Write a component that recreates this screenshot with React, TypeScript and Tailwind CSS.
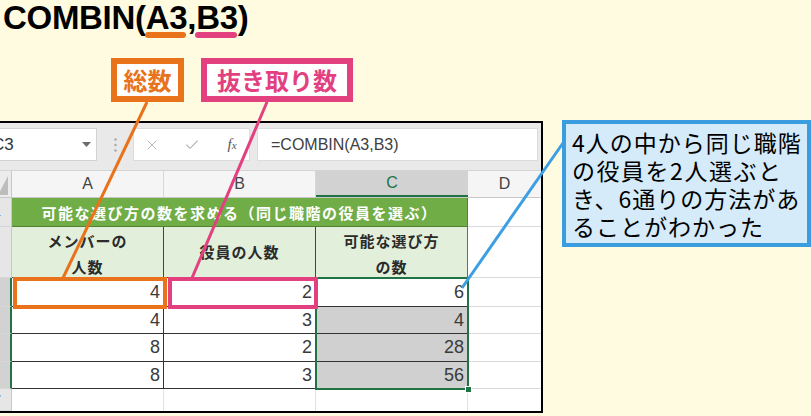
import { X, Check } from "lucide-react";

const JP = "font-['Noto_Sans_CJK_JP','Noto_Sans',sans-serif]";

const rows = [
  { n: 3, a: "4", b: "2", c: "6", h: "h-[29px]", sel: false },
  { n: 4, a: "4", b: "3", c: "4", h: "h-[27px]", sel: true },
  { n: 5, a: "8", b: "2", c: "28", h: "h-[28px]", sel: true },
  { n: 6, a: "8", b: "3", c: "56", h: "h-[27px]", sel: true },
];

function RowHead({ n, active }: { n: number; active?: boolean }) {
  return (
    <div
      className={`w-[30px] shrink-0 flex items-center justify-end pr-[10px] text-[13px] text-[#4d6584] border-b border-b-[#d6d6d6] ${
        active ? "bg-[#d2d2d2] border-r-2 border-r-[#217346]" : "bg-[#e6e6e6] border-r border-r-[#c8c8c8]"
      }`}
    >
      {n}
    </div>
  );
}

function FormulaBar() {
  return (
    <div className="flex items-start h-[48px] pt-[5px] bg-[#e9e9e9] border-b border-[#d4d4d4]">
      <div className="ml-[4px] w-[111px] h-[33px] shrink-0 bg-white border border-[#d2d2d2] flex items-center justify-between pl-[5px] pr-[5px]">
        <span className="text-[17px] text-[#333]">C3</span>
        <svg width="9" height="5" viewBox="0 0 9 5">
          <polygon points="0,0 9,0 4.5,5" fill="#6b6b6b" />
        </svg>
      </div>
      <div className="w-[36px] h-[33px] shrink-0 flex items-center justify-center">
        <svg width="3" height="14" viewBox="0 0 3 14">
          <circle cx="1.5" cy="1.5" r="1.2" fill="#a8a8a8" />
          <circle cx="1.5" cy="7" r="1.2" fill="#a8a8a8" />
          <circle cx="1.5" cy="12.5" r="1.2" fill="#a8a8a8" />
        </svg>
      </div>
      <div className="w-[117px] h-[33px] shrink-0 bg-white border border-[#dcdcdc] flex items-center pl-[10px] gap-[24px]">
        <X size={16} strokeWidth={1.4} color="#b4b4b4" />
        <Check size={16} strokeWidth={1.6} color="#b4b4b4" />
        <span className="w-[16px] text-center font-['Liberation_Serif',serif] italic text-[15px] text-[#555]">
          f<span className="text-[11px]">x</span>
        </span>
      </div>
      <div className="ml-[7px] w-[281px] h-[33px] shrink-0 bg-white border border-[#dcdcdc] flex items-center pl-[13px] text-[16px] text-[#404040]">
        =COMBIN(A3,B3)
      </div>
    </div>
  );
}

function Sheet() {
  return (
    <div className="-ml-[20px] mt-[19px] w-[563px] h-[292px] shrink-0 border-2 border-black bg-white flex flex-col font-['Liberation_Sans',sans-serif]">
      <FormulaBar />
      {/* column headers */}
      <div className="flex h-[27px] bg-[#f5f5f5] text-[16px] text-[#444] border-b border-[#c8c8c8]">
        <div className="w-[30px] shrink-0 bg-[#ececec] border-r border-[#c8c8c8] flex items-end justify-end pr-[3px] pb-[2px]">
          <svg width="10" height="19" viewBox="0 0 10 19">
            <polygon points="10,0 10,19 0,19" fill="#bdbdbd" />
          </svg>
        </div>
        <div className="w-[152px] shrink-0 flex items-center justify-center border-r border-[#d8d8d8]">A</div>
        <div className="w-[152px] shrink-0 flex items-center justify-center border-r border-[#d8d8d8]">B</div>
        <div className="w-[152px] shrink-0 flex items-center justify-center bg-[#d2d2d2] border-b-2 border-[#217346] text-[#217346]">C</div>
        <div className="flex-1 flex items-center justify-center">D</div>
      </div>

      <div className="relative flex-1 flex flex-col">
        {/* row 1 */}
        <div className="flex h-[29px]">
          <RowHead n={1} />
          <div className={`w-[456px] shrink-0 bg-[#70ad47] border-b border-r border-[#548235] flex items-center justify-center pt-[2px] text-[15px] tracking-[1.5px] font-bold text-white ${JP}`}>
            可能な選び方の数を求める（同じ職階の役員を選ぶ）
          </div>
          <div className="flex-1 border-b border-[#dadada]" />
        </div>
        {/* row 2 */}
        <div className={`flex h-[51px] text-[15px] leading-[26px] tracking-[1px] font-bold text-[#2b2b2b] ${JP}`}>
          <RowHead n={2} />
          <div className="w-[152px] shrink-0 bg-[#e2efda] border-r border-b border-[#444] flex flex-col items-center justify-center pt-[4px]">
            <span>メンバーの</span>
            <span>人数</span>
          </div>
          <div className="w-[152px] shrink-0 bg-[#e2efda] border-r border-b border-[#444] flex items-center justify-center">
            役員の人数
          </div>
          <div className="w-[152px] shrink-0 bg-[#e2efda] border-r border-r-[#548235] border-b border-b-[#444] flex flex-col items-center justify-center pt-[4px]">
            <span>可能な選び方</span>
            <span>の数</span>
          </div>
          <div className="flex-1 border-b border-[#dadada]" />
        </div>
        {/* data rows */}
        {rows.map((r) => (
          <div key={r.n} className={`flex ${r.h} text-[18px] text-[#3a3a3a] font-['Liberation_Sans_Narrow','Liberation_Sans',sans-serif]`}>
            <RowHead n={r.n} active />
            <div className="w-[152px] shrink-0 border-r border-b border-[#333] flex items-center justify-end pr-[3px]">{r.a}</div>
            <div className="w-[152px] shrink-0 border-r border-b border-[#333] flex items-center justify-end pr-[3px]">{r.b}</div>
            <div className={`w-[152px] shrink-0 border-b border-[#333] flex items-center justify-end pr-[4px] ${r.sel ? "bg-[#d0d0d0]" : "bg-white"}`}>
              {r.c}
            </div>
            <div className="flex-1 border-b border-[#dadada]" />
          </div>
        ))}
        {/* row 7 */}
        <div className="flex flex-1">
          <RowHead n={7} />
          <div className="w-[152px] shrink-0 border-r border-[#e2e2e2]" />
          <div className="w-[152px] shrink-0 border-r border-[#e2e2e2]" />
          <div className="w-[152px] shrink-0 border-r border-[#e2e2e2]" />
          <div className="flex-1" />
        </div>

        {/* selection C3:C6 */}
        <div className="absolute left-[333px] top-[79px] w-[154px] h-[113px] border-2 border-[#217346]" />
        <div className="absolute left-[483px] top-[188px] w-[7px] h-[7px] bg-[#217346] border border-white" />
        {/* highlight boxes */}
        <div className="absolute left-[31px] top-[79px] w-[154px] h-[32px] border-4 border-[#e8731a]" />
        <div className="absolute left-[186px] top-[79px] w-[150px] h-[32px] border-4 border-[#e2407f]" />
      </div>
    </div>
  );
}

export default function App() {
  return (
    <div className="relative w-[811px] h-[416px] overflow-hidden bg-[#fffbe1]">
      <div className="h-[58px] pl-[3px] pt-[1px] font-['Liberation_Sans',sans-serif] text-[33px] leading-[33px] font-bold tracking-[-0.3px] text-black">
        COMBIN(
        <span className="relative">
          A3
          <span className="absolute left-[-1px] right-[1px] top-[33px] h-[6px] rounded-full bg-[#e8731a]" />
        </span>
        ,
        <span className="relative">
          B3
          <span className="absolute left-[-1px] right-[1px] top-[33px] h-[6px] rounded-full bg-[#e2407f]" />
        </span>
        )
      </div>

      <div className={`flex h-[44px] pl-[111px] gap-[17px] text-[24px] font-bold ${JP}`}>
        <div className="w-[73px] border-[6px] border-[#e8731a] bg-white text-[#e8731a] flex items-center justify-center">
          総数
        </div>
        <div className="w-[152px] border-[6px] border-[#e2407f] bg-white text-[#e2407f] flex items-center justify-center">
          抜き取り数
        </div>
      </div>

      <div className="flex items-start">
        <Sheet />
        <div className={`mt-[18px] ml-[19px] w-[249px] h-[127px] shrink-0 border-4 border-[#3a9de0] bg-[#d5ebf9] pl-[6px] pt-[4px] text-[23px] leading-[28px] tracking-[1px] text-black ${JP}`}>
          <div className="whitespace-nowrap">4人の中から同じ職階</div>
          <div className="w-[210px] text-justify [text-align-last:justify]">の役員を2人選ぶと</div>
          <div className="whitespace-nowrap">き、6通りの方法があ</div>
          <div className="whitespace-nowrap">ることがわかった</div>
        </div>
      </div>

      {/* leader lines */}
      <svg className="absolute inset-0 pointer-events-none" width="811" height="416">
        <line x1="147" y1="102" x2="63" y2="278" stroke="#e8731a" strokeWidth="3" />
        <line x1="267" y1="102" x2="192" y2="278" stroke="#e2407f" strokeWidth="3" />
        <line x1="563" y1="143" x2="462" y2="288" stroke="#3d9fe3" strokeWidth="3" />
      </svg>
    </div>
  );
}
